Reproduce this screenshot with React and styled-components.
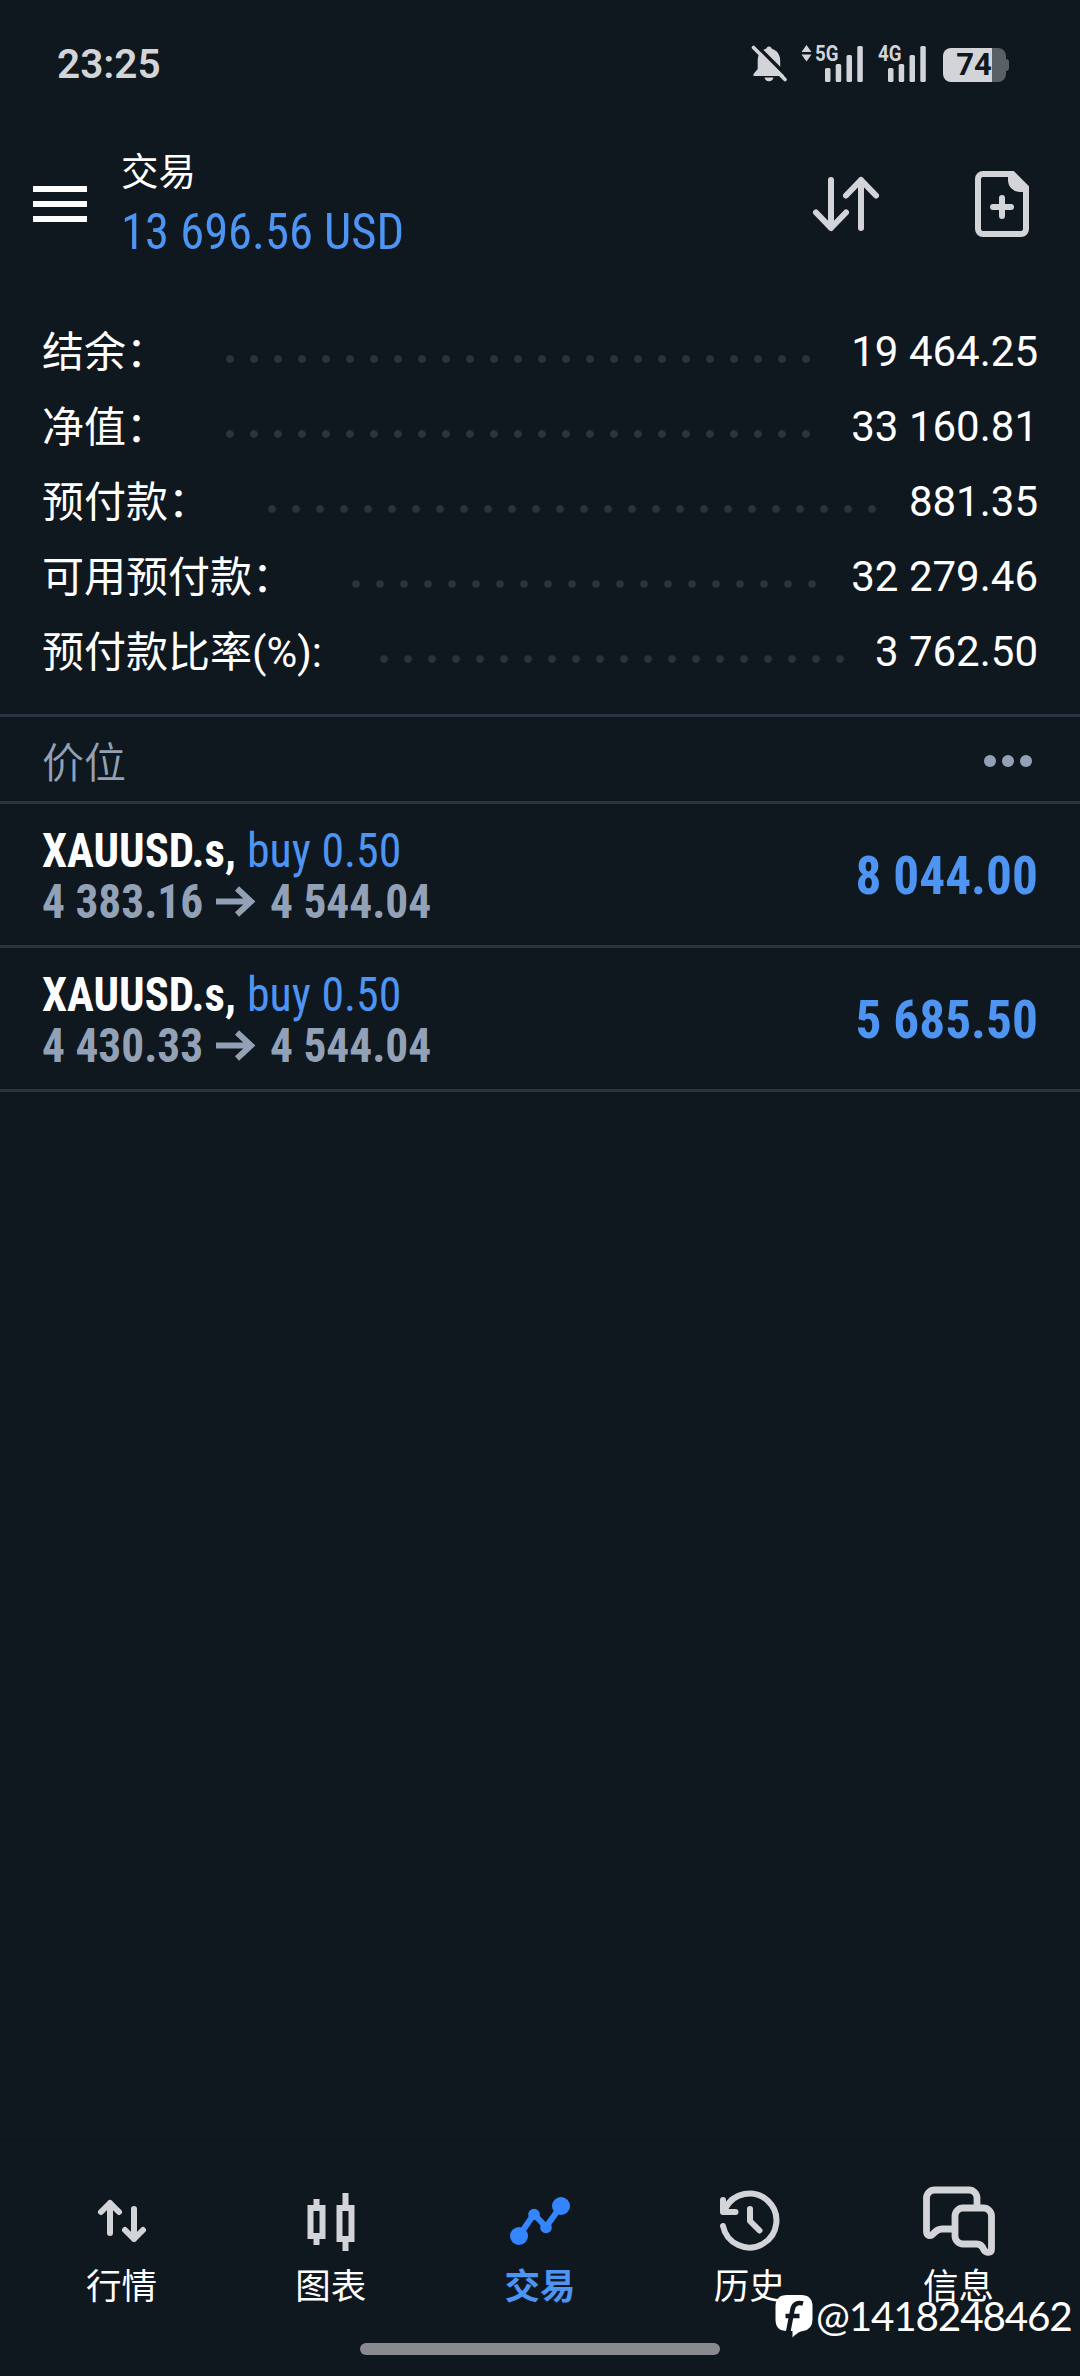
import React from "react";
import styled, { createGlobalStyle } from "styled-components";

const color = {
  bg: "#0f171f",
  line: "#2b3341",
  dot: "#2b333f",
  white: "#ffffff",
  blue: "#4d94f3",
  accent: "#3585ff",
  muted: "#93a1b7",
  icon: "#d3d4d7",
};

const Global = createGlobalStyle`
  html, body { margin: 0; padding: 0; background: ${color.bg}; }
  * { box-sizing: border-box; }
`;

const Screen = styled.div`
  width: 1080px;
  height: 2376px;
  display: flex;
  flex-direction: column;
  overflow: hidden;
  background: ${color.bg};
  color: ${color.white};
  font-family: Roboto, "Noto Sans CJK SC", sans-serif;
  white-space: pre;
`;

const StatusBar = styled.header`
  height: 128px;
  padding: 0 71px 0 57px;
  display: flex;
  justify-content: space-between;
  align-items: center;
`;

const Clock = styled.div`
  font-size: 40.5px;
  font-weight: 600;
  line-height: 60px;
  color: ${color.icon};
`;

const StatusIcons = styled.div`
  display: flex;
  align-items: center;
`;

const Icon = styled.svg`
  display: block;
  flex: none;
  overflow: visible;
  margin-left: ${(p) => p.$ml || 0}px;
`;

const Battery = styled.div`
  width: 63px;
  height: 34px;
  margin-left: 17px;
  margin-right: 3px;
  margin-top: 2px;
  padding-right: 1px;
  border-radius: 8px;
  display: flex;
  align-items: center;
  justify-content: center;
  background: linear-gradient(90deg, ${color.icon} 49px, #5b5f66 49px);
  color: ${color.bg};
  font-size: 31px;
  font-weight: 700;
  line-height: 34px;
  position: relative;
  &::after {
    content: "";
    position: absolute;
    left: 63px;
    top: 11px;
    width: 3px;
    height: 12px;
    border-radius: 0 3px 3px 0;
    background: #5b5f66;
  }
`;

const TopBar = styled.div`
  height: 186px;
  padding: 16px 51px 0 33px;
  display: flex;
  align-items: flex-start;
`;

const Burger = styled.div`
  width: 54px;
  margin-top: 42px;
  display: flex;
  flex-direction: column;
  gap: 9px;
`;

const BurgerLine = styled.div`
  height: 6px;
  background: ${color.white};
`;

const Heading = styled.div`
  flex: 1;
  margin-left: 34px;
`;

const HeaderActions = styled.div`
  display: flex;
  align-items: center;
  margin-top: 27px;
`;

const Title = styled.div`
  font-size: 37.5px;
  line-height: 56px;
`;

const Condensed = styled.span`
  display: inline-block;
  transform: scaleX(${(p) => p.$squeeze || 0.945});
  transform-origin: ${(p) => (p.$right ? "100% 50%" : "0 50%")};
  font-stretch: 75%;
  font-size: ${(p) => p.$size}px;
  font-weight: ${(p) => p.$weight || 400};
  color: ${(p) => p.$color};
`;

const Total = styled.div`
  line-height: 65px;
`;

const Account = styled.section`
  height: 400px;
  padding: 0 42px;
`;

const AccountRow = styled.div`
  display: flex;
  align-items: flex-start;
  height: 75px;
  line-height: 75px;
  font-size: 42px;
`;

const AccountLabel = styled.span`
  padding-top: 1px;
`;

const Leader = styled.div`
  width: ${(p) => p.$count * 24}px;
  height: 8px;
  margin-left: 50px;
  margin-top: 41px;
  background: radial-gradient(circle at center, ${color.dot} 3.4px, transparent 4.2px) 0 0 / 24px 8px repeat-x;
`;

const Amount = styled.span`
  margin-left: auto;
`;

const SectionHead = styled.div`
  height: 90px;
  border-top: 3px solid ${color.line};
  border-bottom: 3px solid ${color.line};
  padding: 0 48px 0 42px;
  display: flex;
  align-items: center;
  justify-content: space-between;
  font-size: 42px;
  color: ${color.muted};
  font-weight: 350;
`;

const SectionTitle = styled.span`
  line-height: 60px;
  padding-top: 9px;
`;

const More = styled.div`
  display: flex;
  gap: 6px;
  margin-top: 4px;
`;

const MoreDot = styled.span`
  width: 12px;
  height: 12px;
  border-radius: 50%;
  background: ${color.muted};
`;

const Position = styled.div`
  height: 144px;
  border-bottom: 3px solid ${color.line};
  padding: 0 42px;
  display: flex;
  justify-content: space-between;
`;

const PositionInfo = styled.div`
  padding-top: 21px;
`;

const Line = styled.div`
  display: flex;
  align-items: center;
  height: 51px;
  line-height: 51px;
`;

const Cell = styled.span`
  display: flex;
  width: ${(p) => p.$w}px;
`;

const Profit = styled.div`
  line-height: 144px;
`;

const Spacer = styled.div`
  flex: 1;
`;

const NavBar = styled.nav`
  height: 236px;
  padding: 38px 17px 0 17px;
  display: flex;
  border-top: 1px solid #0c131b;
`;

const NavItem = styled.div`
  flex: 1;
  display: flex;
  flex-direction: column;
  align-items: center;
  font-size: 35.5px;
  line-height: 50px;
  color: ${(p) => (p.$active ? color.blue : color.white)};
  font-weight: ${(p) => (p.$active ? 700 : 400)};
`;

const NavLabel = styled.span`
  margin-top: -1px;
`;

const HomeIndicator = styled.div`
  position: absolute;
  left: 360px;
  top: 2343px;
  width: 360px;
  height: 12px;
  border-radius: 6px;
  background: #898a8f;
`;

const Watermark = styled.div`
  position: absolute;
  left: 776px;
  top: 2290px;
  height: 52px;
  display: flex;
  align-items: center;
  font-family: Lato, sans-serif;
  font-size: 40.5px;
  line-height: 52px;
  letter-spacing: -1.2px;
  gap: 3px;
`;

const Signal = ({ label, withData, ml }) => (
  <Icon $ml={ml} width={withData ? 61 : 48} height="40" viewBox={withData ? "802 44 61 40" : "815 44 48 40"} fill={color.icon}>
    {withData && <path d="M806.500 45l5 7h-10zM806.500 61.500l-5-7h10z" />}
    <text x="815" y="61" fontSize="22" fontWeight="700" textLength="23.500" lengthAdjust="spacingAndGlyphs">{label}</text>
    <rect x="825" y="68" width="5.500" height="14" rx="1.500" />
    <rect x="835.700" y="64" width="5.500" height="18" rx="1.500" />
    <rect x="846.500" y="55" width="5.500" height="27" rx="1.500" />
    <rect x="857.300" y="46" width="5.500" height="36" rx="1.500" />
  </Icon>
);

const BellOff = () => (
  <Icon width="36" height="38" viewBox="751 45 36 38" fill={color.icon}>
    <path d="M769 46.500c1.500 0 2.500 1 2.800 2.300 5.200 1.500 8.400 6 8.400 11.700v8.500l4 4.500v2.500H753.500v-2l4.200-5v-8.500c0-5.700 3.200-10.200 8.400-11.700.4-1.300 1.400-2.300 2.900-2.300zM764.500 77.500h9c-.3 2.300-2.200 3.700-4.500 3.700s-4.200-1.400-4.500-3.700z" />
    <path d="M756.500 45.500L789 78" stroke={color.bg} strokeWidth="3.500" />
    <path d="M753.500 47.500L785 79.500" stroke={color.icon} strokeWidth="3.600" strokeLinecap="round" />
  </Icon>
);

const SortIcon = () => (
  <Icon width="66" height="54" viewBox="813 177 66 54" fill="none" stroke={color.icon} strokeWidth="6" strokeLinecap="round" strokeLinejoin="round">
    <path d="M831 180v48M816 212.500l15 15.500 15-15.500M861 228v-48M846 195.500l15-15.500 15 15.500" />
  </Icon>
);

const NewOrderIcon = () => (
  <Icon $ml={96} width="54" height="66" viewBox="975 171 54 66" fill="none" stroke={color.icon} strokeWidth="6">
    <path d="M983 174h29.500L1026 187.500V229a5 5 0 0 1-5 5H983a5 5 0 0 1-5-5V179a5 5 0 0 1 5-5z" />
    <path d="M1008 172h5l15 15v5h-8a12 12 0 0 1-12-12z" fill={color.icon} stroke="none" />
    <path d="M1002 198v18M993 207h18" strokeLinecap="round" />
  </Icon>
);

const ArrowRight = () => (
  <Icon width="40" height="30" viewBox="216 887 40 30" fill="none" stroke={color.muted} strokeWidth="6">
    <path d="M216 901.500h35M237 888.500l14 13-14 13" />
  </Icon>
);

const navIcons = {
  quotes: (
    <Icon width="76" height="84" viewBox="84 2178 76 84" fill="none" stroke={color.icon} strokeWidth="6" strokeLinecap="round" strokeLinejoin="round">
      <path d="M110 2232v-30M101 2211l9-9 9 9M134 2208v30M125 2229l9 9 9-9" />
    </Icon>
  ),
  charts: (
    <Icon width="76" height="84" viewBox="293 2178 76 84" fill="none" stroke={color.icon} strokeWidth="6">
      <path d="M310.500 2207h12v28h-12zM316.500 2198v6M316.500 2238v6M339.500 2207h12v31h-12zM345.500 2192v12M345.500 2241v9" />
    </Icon>
  ),
  trade: (
    <Icon width="76" height="84" viewBox="502 2178 76 84" fill={color.accent}>
      <path d="M519 2235l15-22 12 13 15-21" fill="none" stroke={color.accent} strokeWidth="6" />
      <circle cx="519" cy="2235" r="9" />
      <circle cx="534" cy="2213.500" r="5.800" />
      <circle cx="546" cy="2226.500" r="5.800" />
      <circle cx="561" cy="2205" r="9" />
    </Icon>
  ),
  history: (
    <Icon width="76" height="84" viewBox="710 2178 76 84" fill="none" stroke={color.icon} strokeWidth="6" strokeLinecap="round" strokeLinejoin="round">
      <path d="M722 2225A27 27 0 1 0 724 2208M722 2199v12h12.500M749 2208v12l9.500 9.500" />
    </Icon>
  ),
  messages: (
    <Icon width="76" height="84" viewBox="919 2178 76 84" fill="none" stroke={color.icon} strokeWidth="6.800" strokeLinecap="butt" strokeLinejoin="round">
      <path d="M976 2206v-9a8 8 0 0 0-8-8h-34.500a8 8 0 0 0-8 8v33.500c0 4.500 4 5 6.500 2.500 3-3.500 5.500-5 9-5h12" />
      <path d="M962 2207h20.500a8 8 0 0 1 8 8v33c0 4-5 4.500-7.500 1-1.500-4-4-6-7.500-6h-13.500a8 8 0 0 1-8-8v-20a8 8 0 0 1 8-8z" />
    </Icon>
  ),
};

const AppLogo = () => (
  <Icon width="37" height="44" viewBox="776 2298 37 44">
    <path d="M787 2299h14q11.500 0 11.500 11.500v13q0 10-9.500 11.500c-3 .5-5.500 1.500-10.500 6.500v-6.500H787q-11.500 0-11.500-11.500v-13q0-11.500 11.500-11.500z" fill={color.white} />
    <path d="M803 2307.500c-6-1.500-9.500 1-10.500 6l-4.500 23.500M785.500 2320h14" fill="none" stroke={color.bg} strokeWidth="4.600" />
  </Icon>
);

const account = [
  { label: "结余：", value: "19 464.25", dots: 25 },
  { label: "净值：", value: "33 160.81", dots: 25 },
  { label: "预付款：", value: "881.35", dots: 26 },
  { label: "可用预付款：", value: "32 279.46", dots: 20 },
  { label: "预付款比率(%):", value: "3 762.50", dots: 20 },
];

const positions = [
  { symbol: "XAUUSD.s,", side: "buy 0.50", open: "4 383.16", now: "4 544.04", profit: "8 044.00" },
  { symbol: "XAUUSD.s,", side: "buy 0.50", open: "4 430.33", now: "4 544.04", profit: "5 685.50" },
];

const nav = [
  { id: "quotes", label: "行情" },
  { id: "charts", label: "图表" },
  { id: "trade", label: "交易" },
  { id: "history", label: "历史" },
  { id: "messages", label: "信息" },
];

export default function App() {
  return (
    <Screen>
      <Global />
      <StatusBar>
        <Clock>23:25</Clock>
        <StatusIcons>
          <BellOff />
          <Signal label="5G" withData ml={15} />
          <Signal label="4G" ml={15} />
          <Battery>74</Battery>
        </StatusIcons>
      </StatusBar>
      <TopBar>
        <Burger>
          <BurgerLine />
          <BurgerLine />
          <BurgerLine />
        </Burger>
        <Heading>
          <Title>交易</Title>
          <Total>
            <Condensed $squeeze={0.972} $size={50} $color={color.blue}>13 696.56 USD</Condensed>
          </Total>
        </Heading>
        <HeaderActions>
          <SortIcon />
          <NewOrderIcon />
        </HeaderActions>
      </TopBar>
      <Account>
        {account.map((r) => (
          <AccountRow key={r.label}>
            <AccountLabel>{r.label}</AccountLabel>
            <Leader $count={r.dots} />
            <Amount>{r.value}</Amount>
          </AccountRow>
        ))}
      </Account>
      <SectionHead>
        <SectionTitle>价位</SectionTitle>
        <More>
          <MoreDot />
          <MoreDot />
          <MoreDot />
        </More>
      </SectionHead>
      {positions.map((p) => (
        <Position key={p.open}>
          <PositionInfo>
            <Line>
              <Cell $w={205}><Condensed $squeeze={0.934} $size={48} $weight={700} $color={color.white}>{p.symbol}</Condensed></Cell>
              <Condensed $squeeze={0.955} $size={48} $color={color.blue}>{p.side}</Condensed>
            </Line>
            <Line>
              <Cell $w={174}><Condensed $size={48} $weight={700} $color={color.muted}>{p.open}</Condensed></Cell>
              <Cell $w={54}><ArrowRight /></Cell>
              <Condensed $size={48} $weight={700} $color={color.muted}>{p.now}</Condensed>
            </Line>
          </PositionInfo>
          <Profit>
            <Condensed $right $squeeze={0.95} $size={54} $weight={700} $color={color.blue}>{p.profit}</Condensed>
          </Profit>
        </Position>
      ))}
      <Spacer />
      <NavBar>
        {nav.map((n) => (
          <NavItem key={n.id} $active={n.id === "trade"}>
            {navIcons[n.id]}
            <NavLabel>{n.label}</NavLabel>
          </NavItem>
        ))}
      </NavBar>
      <HomeIndicator />
      <Watermark>
        <AppLogo />
        <span>@1418248462</span>
      </Watermark>
    </Screen>
  );
}
